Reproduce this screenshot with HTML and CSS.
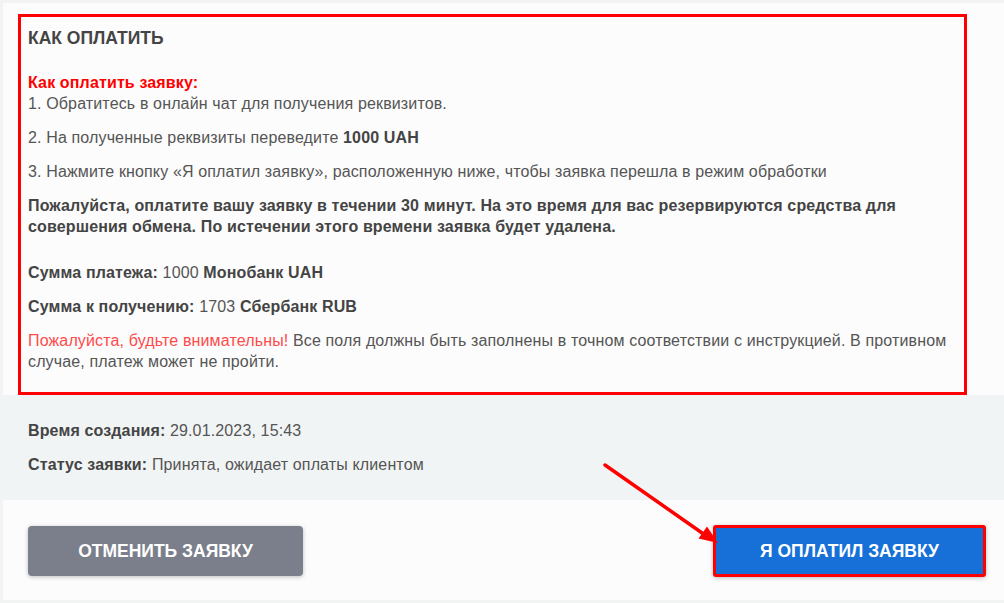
FILE: index.html
```html
<!DOCTYPE html>
<html lang="ru">
<head>
<meta charset="utf-8">
<title>Оплата заявки</title>
<link rel="stylesheet" href="styles.css">
</head>
<body>
<div class="page">
  <section class="panel panel-top">
    <div class="howto">
      <h2 class="howto-title">КАК ОПЛАТИТЬ</h2>
      <div class="howto-lead">Как оплатить заявку:</div>
      <p class="line">1. Обратитесь в онлайн чат для получения реквизитов.</p>
      <p class="line">2. На полученные реквизиты переведите <b>1000 UAH</b></p>
      <p class="line">3. Нажмите кнопку «Я оплатил заявку», расположенную ниже, чтобы заявка перешла в режим обработки</p>
      <p class="line line-strong line-gap">Пожалуйста, оплатите вашу заявку в течении 30 минут. На это время для вас резервируются средства для совершения обмена. По истечении этого времени заявка будет удалена.</p>
      <p class="line"><b>Сумма платежа:</b> 1000 <b>Монобанк UAH</b></p>
      <p class="line"><b>Сумма к получению:</b> 1703 <b>Сбербанк RUB</b></p>
      <p class="line line-last"><span class="warn">Пожалуйста, будьте внимательны!</span> Все поля должны быть заполнены в точном соответствии с инструкцией. В противном случае, платеж может не пройти.</p>
    </div>
  </section>

  <section class="info">
    <p class="line"><b>Время создания:</b> 29.01.2023, 15:43</p>
    <p class="line line-last"><b>Статус заявки:</b> Принята, ожидает оплаты клиентом</p>
  </section>

  <section class="panel actions">
    <button class="btn btn-cancel" type="button">ОТМЕНИТЬ ЗАЯВКУ</button>
    <button class="btn btn-paid" type="button">Я ОПЛАТИЛ ЗАЯВКУ</button>
  </section>

  <svg class="pointer" width="1004" height="603" viewBox="0 0 1004 603" aria-hidden="true">
    <line x1="605" y1="465" x2="705" y2="535" stroke="#ff0000" stroke-width="3.5" stroke-linecap="round"/>
    <polygon points="718,543 698.5,538.5 707,526.5" fill="#ff0000"/>
  </svg>
</div>
</body>
</html>
```

FILE: styles.css
```css
* {
  box-sizing: border-box;
}

html, body {
  margin: 0;
  padding: 0;
}

body {
  background: #f2f4f4;
  font-family: "Liberation Sans", Arial, sans-serif;
  font-size: 16px;
  line-height: 21px;
  letter-spacing: 0.14px;
  color: #555;
}

.page {
  position: relative;
  width: 1004px;
  height: 603px;
  padding-top: 3px;
}

.panel {
  margin-left: 3px;
  background: #fcfcfc;
}

.panel-top {
  padding: 11px 37px 0 15px;
}

.howto {
  border: 3px solid #ff0000;
  padding: 11px 10px 20px 7px;
}

.howto-title {
  margin: 0 0 23px;
  font-size: 17.5px;
  line-height: 21px;
  font-weight: bold;
  letter-spacing: 0;
  color: #444;
}

.howto-lead {
  font-weight: bold;
  color: #ff0000;
}

.line {
  margin: 0 0 13px;
}

.line b {
  color: #444;
}

.line-strong {
  font-weight: bold;
  color: #444;
}

.line-gap {
  margin-bottom: 25px;
}

.line-last {
  margin-bottom: 0;
}

.warn {
  color: #ff4a4a;
}

.info {
  height: 105px;
  padding: 25px 25px 0 28px;
  background: #f1f4f4;
}

.actions {
  height: 100px;
  display: flex;
  justify-content: space-between;
  align-items: flex-start;
  padding: 26px 18px 0 25px;
}

.btn {
  height: 50px;
  border-radius: 4px;
  font-family: "Liberation Sans", Arial, sans-serif;
  font-size: 17.5px;
  font-weight: bold;
  letter-spacing: 0;
  color: #fff;
  cursor: pointer;
  box-shadow: 0 1px 4px rgba(0, 0, 0, 0.25);
}

.btn-cancel {
  width: 275px;
  border: 0;
  background: #7b7f8b;
}

.btn-paid {
  width: 273px;
  height: 52px;
  margin-top: -1px;
  border: 3px solid #ff0000;
  border-radius: 3px;
  background: #1670d8;
}

.pointer {
  position: absolute;
  left: 0;
  top: 0;
  pointer-events: none;
}
```
